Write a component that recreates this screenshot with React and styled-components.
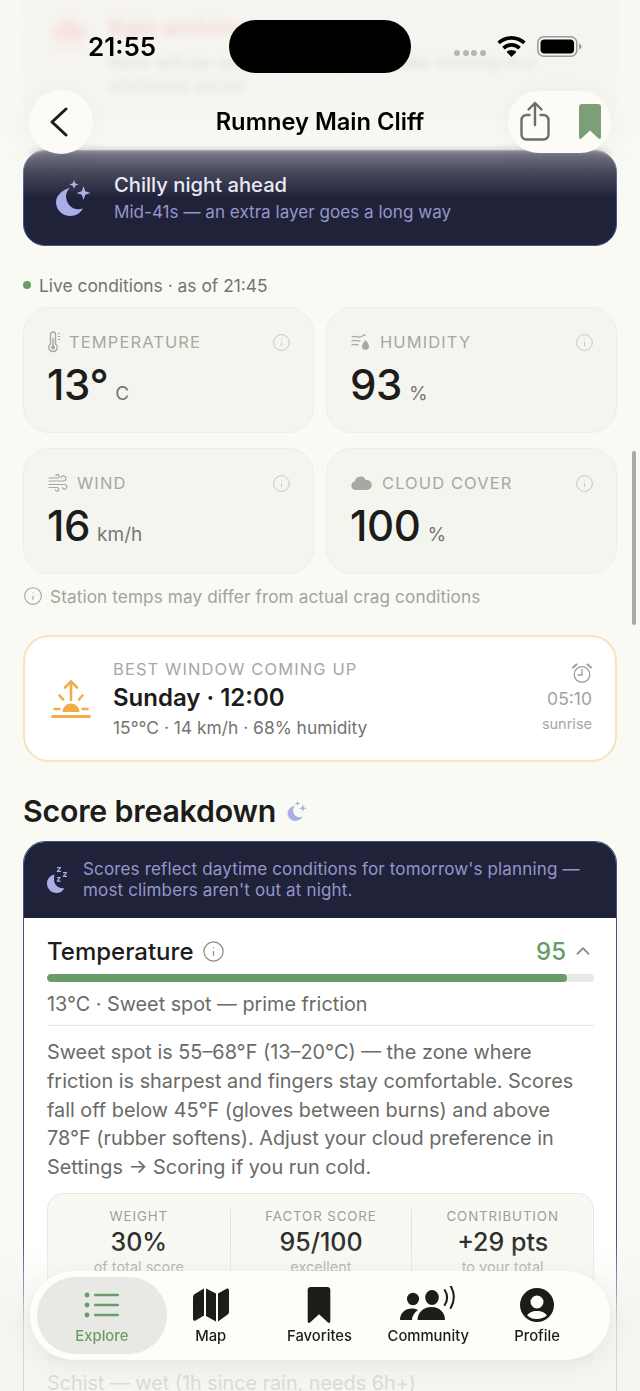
import React from "react";
import styled, { createGlobalStyle } from "styled-components";
import { ChevronUp, Info } from "lucide-react";

const GlobalStyle = createGlobalStyle`
  html, body { margin: 0; padding: 0; background: #fafaf5; }
  * { box-sizing: border-box; }
  body { font-family: Inter, "Noto Sans", sans-serif; color: #1c1c1a; }
`;

const Page = styled.div`
  position: relative;
  width: 640px;
  height: 1391px;
  overflow: hidden;
  background: #fafaf5;
`;

const Content = styled.main`
  display: flex;
  flex-direction: column;
  padding: 0 23px;
  margin-top: -20px;
`;

const RainCard = styled.section`
  height: 142px;
  display: flex;
  gap: 21px;
  padding: 32px 28px 0;
  background: #f1e9e3;
  border: 1px solid #f0d4cb;
  border-radius: 22px;
  margin-bottom: 28px;
`;

const RainTitle = styled.div`
  font-size: 23px;
  line-height: 30px;
  font-weight: 600;
  color: #e0796b;
`;

const RainText = styled.div`
  font-size: 18px;
  line-height: 23px;
  color: #86837e;
  width: 430px;
  margin-top: 8px;
`;

const NightCard = styled.section`
  height: 96px;
  display: flex;
  align-items: center;
  gap: 23px;
  padding: 0 26px 0 31px;
  background: #20223a;
  border: 1px solid #4c5088;
  border-radius: 22px;
`;

const NightTitle = styled.div`
  font-size: 20.2px;
  font-weight: 500;
  line-height: 27px;
  color: #e9e9f5;
`;

const NightSub = styled.div`
  font-size: 17.1px;
  line-height: 27px;
  color: #9497c8;
`;

const LiveRow = styled.div`
  display: flex;
  align-items: center;
  gap: 8px;
  margin: 29px 0 12px;
  height: 20px;
  font-size: 17.4px;
  color: #73746f;
`;

const Dot = styled.span`
  width: 8px;
  height: 8px;
  border-radius: 50%;
  background: #6a9c68;
`;

const Grid = styled.div`
  display: grid;
  grid-template-columns: 291px 291px;
  column-gap: 12px;
  row-gap: 15px;
`;

const Metric = styled.div`
  height: 126px;
  padding: 24px 22px 0 24px;
  background: #f5f5f0;
  border: 1px solid #eeeee8;
  border-radius: 26px;
`;

const MetricHead = styled.div`
  display: flex;
  align-items: center;
  height: 20px;
  color: #a6a8a2;
  svg { flex: none; }
`;

const MetricLabel = styled.span`
  flex: 1;
  margin-left: ${(p) => p.$gap}px;
  font-size: 16.5px;
  letter-spacing: 1.1px;
  color: #a6a8a2;
`;

const MetricValue = styled.div`
  display: flex;
  align-items: baseline;
  gap: 7px;
  margin: 8px 0 0 -1px;
  line-height: 50px;
  font-size: 42px;
  font-weight: 500;
  letter-spacing: -0.4px;
  color: #1c1c1a;
`;

const MetricUnit = styled.span`
  font-size: 19px;
  font-weight: 400;
  letter-spacing: 0;
  color: #777873;
`;

const StationNote = styled.div`
  display: flex;
  align-items: center;
  gap: 7px;
  height: 24px;
  margin: 10px 0 27px 0;
  font-size: 17.2px;
  letter-spacing: 0.1px;
  color: #a1a39d;
`;

const BestCard = styled.section`
  height: 127px;
  display: flex;
  align-items: center;
  padding: 0 23px 0 26px;
  background: #fff;
  border: 2px solid #f9e3bf;
  border-radius: 26px;
`;

const BestBody = styled.div`
  flex: 1;
  margin-left: 22px;
`;

const BestEyebrow = styled.div`
  font-size: 16.5px;
  line-height: 22px;
  letter-spacing: 1.1px;
  color: #a6a8a2;
`;

const BestTitle = styled.div`
  font-size: 24px;
  line-height: 36px;
  font-weight: 600;
  color: #1c1c1a;
`;

const BestMeta = styled.div`
  font-size: 17.4px;
  line-height: 23px;
  color: #73746f;
`;

const BestSide = styled.div`
  display: flex;
  flex-direction: column;
  align-items: flex-end;
`;

const BestTime = styled.div`
  font-size: 17.5px;
  line-height: 24px;
  margin-top: 3px;
  color: #a1a39d;
`;

const BestSideNote = styled.div`
  font-size: 14.5px;
  line-height: 21px;
  margin-top: 2px;
  color: #a6a8a2;
`;

const SectionTitle = styled.h2`
  display: flex;
  align-items: center;
  gap: 11px;
  height: 40px;
  margin: 29px 0 10px;
  font-size: 30.3px;
  font-weight: 600;
  letter-spacing: -0.2px;
  color: #1c1c1a;
`;

const ScoreCard = styled.section`
  background: #fff;
  border: 1.5px solid #4c5088;
  border-radius: 22px 22px 0 0;
  overflow: hidden;
`;

const ScoreNotice = styled.div`
  height: 76px;
  display: flex;
  align-items: center;
  gap: 15px;
  padding: 0 22px 0 23px;
  background: #20223a;
  font-size: 17px;
  line-height: 21px;
  letter-spacing: 0.15px;
  color: #9497c8;
  svg { flex: none; }
`;

const Factor = styled.div`
  padding: 0 22px 0 23px;
`;

const FactorHead = styled.div`
  display: flex;
  align-items: center;
  height: 42px;
  margin-top: ${(p) => p.$top}px;
`;

const FactorName = styled.span`
  font-size: 24px;
  font-weight: 500;
  color: #1c1c1a;
`;

const FactorScore = styled.span`
  margin-left: auto;
  font-size: 24px;
  font-weight: 500;
  color: ${(p) => p.$color};
`;

const Track = styled.div`
  height: 8px;
  margin-top: 2px;
  border-radius: 4px;
  background: #e8e8e4;
  overflow: hidden;
`;

const TrackFill = styled.div`
  height: 100%;
  border-radius: 4px;
  background: ${(p) => p.$color};
`;

const FactorSummary = styled.div`
  font-size: 19.8px;
  line-height: 26px;
  margin-top: 9px;
  padding-bottom: 8px;
  border-bottom: ${(p) => (p.$plain ? "none" : "1px solid #e6e6e1")};
  color: #6a6b66;
`;

const FactorText = styled.p`
  margin: 12px 0 11px;
  font-size: 19.85px;
  line-height: 28.8px;
  color: #6a6b66;
`;

const StatsBox = styled.div`
  display: grid;
  grid-template-columns: repeat(3, 1fr);
  height: 102px;
  padding-top: 15px;
  background: #f9f9f4;
  border: 1px solid #e8e8e2;
  border-radius: 16px;
`;

const Stat = styled.div`
  display: flex;
  flex-direction: column;
  align-items: center;
  height: 70px;
  border-left: ${(p) => (p.$first ? "none" : "1px solid #e4e4df")};
`;

const StatLabel = styled.div`
  font-size: 13.3px;
  line-height: 14px;
  letter-spacing: 0.9px;
  color: #9c9e98;
`;

const StatValue = styled.div`
  font-size: 25px;
  line-height: 34px;
  margin-top: 2px;
  font-weight: 500;
  color: #2c2c2a;
`;

const StatNote = styled.div`
  font-size: 14.5px;
  line-height: 20px;
  margin-top: -2px;
  color: #a6a8a2;
`;

const TopBlur = styled.div`
  position: absolute;
  inset: 0 0 auto 0;
  height: 160px;
  backdrop-filter: blur(3.500px);
  mask-image: linear-gradient(#000 88%, transparent 100%);
`;

const TopFade = styled.div`
  position: absolute;
  inset: 0 0 auto 0;
  height: 198px;
  background: linear-gradient(
    rgba(247, 247, 243, 0.76) 0%,
    rgba(248, 248, 243, 0.8) 68%,
    rgba(248, 248, 243, 0.42) 76%,
    rgba(248, 248, 243, 0.18) 87%,
    rgba(248, 248, 243, 0) 100%
  );
`;

const BottomVeil = styled.div`
  position: absolute;
  inset: auto 0 0 0;
  height: 150px;
  background: linear-gradient(rgba(243, 243, 239, 0), rgba(243, 243, 239, 0.82) 55%, rgba(243, 243, 239, 0.82));
`;

const ScrollThumb = styled.div`
  position: absolute;
  top: 451px;
  right: 4px;
  width: 4px;
  height: 174px;
  border-radius: 2px;
  background: #a9aaa6;
`;

const Island = styled.div`
  position: absolute;
  top: 20px;
  left: 229px;
  width: 182px;
  height: 53px;
  border-radius: 27px;
  background: #000;
`;

const StatusTime = styled.div`
  position: absolute;
  top: 32px;
  left: 88px;
  font-family: Inter, sans-serif;
  font-size: 26px;
  line-height: 30px;
  font-weight: 600;
  color: #000;
`;

const StatusIcons = styled.div`
  position: absolute;
  top: 36px;
  left: 454px;
  display: flex;
  align-items: center;
  gap: 11px;
`;

const SignalDots = styled.div`
  display: flex;
  gap: 2.5px;
  margin-top: 12px;
`;

const SignalDot = styled.span`
  width: 6px;
  height: 6px;
  border-radius: 50%;
  background: #b5b5b1;
`;

const RoundButton = styled.button`
  position: absolute;
  top: 90px;
  left: 29px;
  width: 64px;
  height: 64px;
  display: flex;
  align-items: center;
  justify-content: center;
  padding: 0 4px 0 0;
  border: none;
  border-radius: 50%;
  background: #fcfbf6;
  color: #1c1c1a;
  box-shadow: 0 4px 24px rgba(60, 60, 50, 0.06);
`;

const HeaderTitle = styled.h1`
  position: absolute;
  top: 105px;
  left: 0;
  right: 0;
  margin: 0;
  text-align: center;
  font-size: 23.7px;
  line-height: 34px;
  font-weight: 600;
  color: #000;
`;

const ActionPill = styled.div`
  position: absolute;
  top: 91px;
  left: 508px;
  width: 103px;
  height: 62px;
  display: flex;
  align-items: center;
  justify-content: space-between;
  padding: 0 10px 2px 12px;
  border-radius: 31px;
  background: #fcfbf6;
  box-shadow: 0 4px 24px rgba(60, 60, 50, 0.06);
`;

const TabBar = styled.nav`
  position: absolute;
  top: 1271px;
  left: 30px;
  width: 580px;
  height: 89px;
  display: grid;
  grid-template-columns: repeat(5, 108.8px);
  align-items: center;
  padding: 0 0 0 17.5px;
  border-radius: 45px;
  background: rgba(253, 253, 249, 0.97);
  backdrop-filter: blur(4px);
  box-shadow: 0 6px 24px rgba(60, 60, 50, 0.08);
`;

const Tab = styled.div`
  display: flex;
  flex-direction: column;
  align-items: center;
  justify-content: flex-start;
  height: 77px;
  margin: ${(p) => (p.$active ? "0 -11px" : "0")};
  padding-top: 9px;
  border-radius: 38px;
  background: ${(p) => (p.$active ? "#e8e8e4" : "transparent")};
  color: ${(p) => (p.$active ? "#6a9c68" : "#1c1c1a")};
`;

const TabIcon = styled.div`
  height: 38px;
  display: flex;
  align-items: center;
  justify-content: center;
`;

const TabLabel = styled.span`
  margin-top: 3px;
  font-size: 14.8px;
  line-height: 18px;
  font-weight: 500;
`;

const MoonStars = ({ size = 36, color = "#a9aee6" }) => (
  <svg width={size} height={size} viewBox="0 0 36 36" fill={color}>
    <path d="M15 8C8 9.500 1 15 1 22c0 8 6.500 14 14.500 14 5.500 0 10-3 12.500-7.500-1.500.6-3 .8-4.500.8C16 29.300 11 23 11 16c0-3 1.500-5.800 4-8z" />
    <path d="M19 0l1.200 3.300L23.500 4.500l-3.300 1.200L19 9l-1.200-3.300L14.500 4.500l3.300-1.200z" />
    <path d="M28.500 6l1.700 5.300 5.300 1.700-5.300 1.700-1.700 5.300-1.700-5.300-5.300-1.700 5.300-1.700z" />
  </svg>
);

const MoonZzz = () => (
  <svg width="21" height="26" viewBox="0 0 21 26" fill="#a9aee6">
    <path d="M7.500 7.500C3 8.500 0 12 0 16.500 0 21.800 4.200 26 9.500 26c3.500 0 6.500-2 8-5-5.500 1-10.500-2.500-10.500-8.500 0-1.800.2-3.500.5-5z" />
    <path d="M10 0h4v1l-2.600 2.800H14v1.200h-4.200v-1l2.600-2.800H10zM16 5h4v1l-2.600 2.800H20V10h-4.200V9l2.600-2.800H16zM10 10h3.600v1l-2.200 2.500h2.200v1.200H9.800v-1l2.200-2.500H10z" />
  </svg>
);

const RainCloud = () => (
  <svg width="36" height="44" viewBox="0 0 36 44" fill="#eea99e">
    <path d="M8 28a7.500 7.500 0 0 1-1-15 10.500 10.500 0 0 1 20-1 8 8 0 0 1 0 16z" />
    <path d="M9 33l-2 6M18 33l-2 6M27 33l-2 6" fill="none" stroke="#eea99e" strokeWidth="3" strokeLinecap="round" />
  </svg>
);

const BackChevron = () => (
  <svg width="18" height="30" viewBox="0 0 18 30" fill="none" stroke="#1c1c1a" strokeWidth="3" strokeLinecap="round" strokeLinejoin="round">
    <path d="M16 2L2 15l14 13" />
  </svg>
);

const Thermometer = () => (
  <svg width="12" height="22" viewBox="0 0 12 22" fill="none" stroke="#a6a8a2" strokeWidth="1.400">
    <path d="M2.500 13V3.500a2.500 2.500 0 0 1 5 0V13a4.200 4.200 0 1 1-5 0z" />
    <circle cx="5" cy="16.500" r="2" fill="#a6a8a2" stroke="none" />
    <path d="M5 16V7" />
    <path d="M10 2.500h2M10 5.500h2M10 8.500h2" strokeWidth="1" />
  </svg>
);

const HumidityIcon = () => (
  <svg width="19" height="18" viewBox="0 0 19 18" fill="none" stroke="#a6a8a2" strokeWidth="1.300" strokeLinecap="round">
    <path d="M1 4c3-2 5 1 8 0s3-2 5-2M1 8c3-2 5 1 8 0M1 12c2-1.500 4 0 6 0" />
    <path d="M14.500 7c2 2.500 3.500 4 3.500 6.300a3.500 3.500 0 0 1-7 0C11 11 12.500 9.500 14.500 7z" fill="#a6a8a2" stroke="none" />
  </svg>
);

const WindIcon = () => (
  <svg width="20" height="18" viewBox="0 0 20 18" fill="none" stroke="#a6a8a2" strokeWidth="1.200" strokeLinecap="round">
    <path d="M1 7h14.500a2.500 2.500 0 1 0-2.400-3.300M1 4h8.500a1.700 1.700 0 1 0-1.600-2.300M1 10.500h15.500a2.300 2.300 0 1 1-2.200 3M1 13.500h8a1.800 1.800 0 1 1-1.700 2.400" />
  </svg>
);

const CloudIcon = () => (
  <svg width="21" height="14" viewBox="0 0 21 14" fill="#a6a8a2">
    <path d="M4.500 14A4.300 4.300 0 0 1 3.800 5.500 5.800 5.800 0 0 1 14.800 4 4.900 4.900 0 0 1 16.500 14z" />
  </svg>
);

const SunriseIcon = () => (
  <svg width="40" height="38" viewBox="0 0 40 38" fill="none" stroke="#f2ad48" strokeWidth="2.600" strokeLinecap="round">
    <path d="M20 20V2M14 7.500L20 1.500l6 6" />
    <path d="M8.500 15.500l3.500 4M31.500 15.500l-3.500 4" />
    <path d="M3.500 29h5M31.500 29h5" />
    <path d="M1.500 36.500h37" strokeWidth="3" />
    <path d="M11.500 32a8.500 8.500 0 0 1 17 0z" fill="#f2ad48" stroke="none" />
  </svg>
);

const AlarmIcon = () => (
  <svg width="20" height="21" viewBox="0 0 20 21" fill="none" stroke="#9c9e98" strokeWidth="1.300" strokeLinecap="round">
    <circle cx="10" cy="11.500" r="7.800" />
    <path d="M10 6.500v5.500H6" />
    <path d="M1 4.500L4.500 1.500M19 4.500L15.500 1.500" strokeWidth="2" />
  </svg>
);

const ShareIcon = () => (
  <svg width="30" height="40" viewBox="0 0 30 40" fill="none" stroke="#6b6e69" strokeWidth="2.400" strokeLinecap="round" strokeLinejoin="round">
    <path d="M15 24V2M8.500 8.500L15 2l6.500 6.500" />
    <path d="M9.500 14H6.500a5 5 0 0 0-5 5v14.500a5 5 0 0 0 5 5h17a5 5 0 0 0 5-5V19a5 5 0 0 0-5-5h-3" />
  </svg>
);

const BookmarkIcon = ({ width = 22, height = 35, color = "#7d9f78" }) => (
  <svg width={width} height={height} viewBox="0 0 22 35" fill={color}>
    <path d="M3 0h16a3 3 0 0 1 3 3v30.500c0 1.200-1.300 1.900-2.300 1.100L11 26.500l-8.700 8.100c-1 .8-2.300.1-2.300-1.100V3a3 3 0 0 1 3-3z" />
  </svg>
);

const WifiIcon = () => (
  <svg width="29" height="21" viewBox="0 0 29 21" fill="#000">
    <path d="M14.500 0C9 0 4 2.100.4 5.600l2.500 2.700A16.600 16.600 0 0 1 14.500 3.700c4.500 0 8.600 1.700 11.600 4.600l2.500-2.700C25 2.100 20 0 14.500 0z" />
    <path d="M14.500 7c-3.600 0-6.900 1.400-9.300 3.700l2.500 2.700a9.800 9.800 0 0 1 13.600 0l2.500-2.700C21.400 8.400 18.100 7 14.500 7z" />
    <path d="M14.500 14c-1.900 0-3.600.7-4.900 1.900l4.900 5.100 4.900-5.100c-1.300-1.200-3-1.900-4.900-1.900z" />
  </svg>
);

const BatteryIcon = () => (
  <svg width="45" height="21" viewBox="0 0 45 21" fill="none">
    <rect x="0.800" y="0.800" width="39" height="19.400" rx="6" stroke="#9a9a96" strokeWidth="1.500" />
    <rect x="3.500" y="3.500" width="33.600" height="14" rx="4" fill="#000" />
    <path d="M42 7.500c1.500.5 2.500 1.600 2.500 3s-1 2.500-2.500 3z" fill="#9a9a96" />
  </svg>
);

const ListIcon = () => (
  <svg width="36" height="28" viewBox="0 0 36 28" fill="#6a9c68">
    <circle cx="3" cy="4" r="2.400" />
    <circle cx="3" cy="14" r="2.400" />
    <circle cx="3" cy="24" r="2.400" />
    <rect x="10" y="2.700" width="25" height="2.600" rx="1.300" />
    <rect x="10" y="12.700" width="25" height="2.600" rx="1.300" />
    <rect x="10" y="22.700" width="25" height="2.600" rx="1.300" />
  </svg>
);

const MapIcon = () => (
  <svg width="36" height="34" viewBox="0 0 36 34" fill="#1c1c1a">
    <path d="M11 0.500L2.500 5.500C1 6.400 0 7.500 0 9.500V31c0 1.500 1.400 2.300 2.600 1.600L11 27.500z" />
    <path d="M13 0.500l10 5v28l-10-5.500z" />
    <path d="M25 5.500L33.500 0.700c1.200-.7 2.500 0 2.500 1.500v21.500c0 1.500-.8 2.700-2 3.400L25 33.500z" />
  </svg>
);

const PeopleIcon = () => (
  <svg width="56" height="38" viewBox="0 1 56 38" fill="#1c1c1a">
    <ellipse cx="13" cy="14" rx="6" ry="6.200" />
    <ellipse cx="32" cy="12.500" rx="6.800" ry="7.500" />
    <path d="M0 35C0 28 5 23.500 12 23.500c2.500 0 4.500.6 6 1.500C14.500 27.500 12 31 12 35z" />
    <path d="M17.500 35c0-7 5.500-13 14-13S45 28 45 35z" />
    <path d="M44.700 5Q49.500 12.500 44.700 20" fill="none" stroke="#1c1c1a" strokeWidth="2" strokeLinecap="round" />
    <path d="M50.700 1Q57 12 50.700 23" fill="none" stroke="#1c1c1a" strokeWidth="2" strokeLinecap="round" />
  </svg>
);

const ProfileIcon = () => (
  <svg width="34" height="34" viewBox="0 0 34 34" fill="#1c1c1a">
    <path
      fillRule="evenodd"
      d="M17 0a17 17 0 1 1 0 34 17 17 0 0 1 0-34zm0 7.500a6.500 6.500 0 1 0 0 13 6.500 6.500 0 0 0 0-13zM17 23c-5 0-8.500 2-9.800 4.500A13.500 13.500 0 0 0 17 31c3.900 0 7.400-1.300 9.800-3.500C25.500 25 22 23 17 23z"
    />
  </svg>
);

const metrics = [
  { label: "TEMPERATURE", gap: 9, icon: <Thermometer />, value: "13°", unit: "C" },
  { label: "HUMIDITY", gap: 10, icon: <HumidityIcon />, value: "93", unit: "%" },
  { label: "WIND", gap: 9, icon: <WindIcon />, value: "16", unit: "km/h" },
  { label: "CLOUD COVER", gap: 10, icon: <CloudIcon />, value: "100", unit: "%" },
];

const stats = [
  { label: "WEIGHT", value: "30%", note: "of total score" },
  { label: "FACTOR SCORE", value: "95/100", note: "excellent" },
  { label: "CONTRIBUTION", value: "+29 pts", note: "to your total" },
];

const tabs = [
  { label: "Explore", icon: <ListIcon />, active: true },
  { label: "Map", icon: <MapIcon /> },
  { label: "Favorites", icon: <BookmarkIcon width={24} height={36} color="#1c1c1a" /> },
  { label: "Community", icon: <PeopleIcon /> },
  { label: "Profile", icon: <ProfileIcon /> },
];

export default function App() {
  return (
    <Page>
      <GlobalStyle />
      <Content>
        <RainCard>
          <RainCloud />
          <div>
            <RainTitle>Rain arriving</RainTitle>
            <RainText>Rock will be wet by evening. Consider moving to a sheltered sector</RainText>
          </div>
        </RainCard>

        <NightCard>
          <MoonStars />
          <div>
            <NightTitle>Chilly night ahead</NightTitle>
            <NightSub>Mid-41s — an extra layer goes a long way</NightSub>
          </div>
        </NightCard>

        <LiveRow>
          <Dot />
          Live conditions · as of 21:45
        </LiveRow>

        <Grid>
          {metrics.map((m) => (
            <Metric key={m.label}>
              <MetricHead>
                {m.icon}
                <MetricLabel $gap={m.gap}>{m.label}</MetricLabel>
                <Info size={19} strokeWidth={1.2} color="#c4c5c0" />
              </MetricHead>
              <MetricValue>
                {m.value}
                <MetricUnit>{m.unit}</MetricUnit>
              </MetricValue>
            </Metric>
          ))}
        </Grid>

        <StationNote>
          <Info size={20} strokeWidth={1.3} color="#a1a39d" />
          Station temps may differ from actual crag conditions
        </StationNote>

        <BestCard>
          <SunriseIcon />
          <BestBody>
            <BestEyebrow>BEST WINDOW COMING UP</BestEyebrow>
            <BestTitle>Sunday · 12:00</BestTitle>
            <BestMeta>15°°C · 14 km/h · 68% humidity</BestMeta>
          </BestBody>
          <BestSide>
            <AlarmIcon />
            <BestTime>05:10</BestTime>
            <BestSideNote>sunrise</BestSideNote>
          </BestSide>
        </BestCard>

        <SectionTitle>
          Score breakdown
          <MoonStars size={20} />
        </SectionTitle>

        <ScoreCard>
          <ScoreNotice>
            <MoonZzz />
            <span>
              Scores reflect daytime conditions for tomorrow's planning — most climbers aren't out at night.
            </span>
          </ScoreNotice>
          <Factor>
            <FactorHead $top={12}>
              <FactorName>Temperature</FactorName>
              <Info size={23} strokeWidth={1.3} color="#8d8f89" style={{ marginLeft: 9 }} />
              <FactorScore $color="#6a9c68">95</FactorScore>
              <ChevronUp size={22} strokeWidth={2} color="#8d8f89" style={{ marginLeft: 6 }} />
            </FactorHead>
            <Track>
              <TrackFill $color="#6a9c68" style={{ width: "95%" }} />
            </Track>
            <FactorSummary>13°C · Sweet spot — prime friction</FactorSummary>
            <FactorText>
              Sweet spot is 55–68°F (13–20°C) — the zone where friction is sharpest and fingers stay comfortable. Scores fall off below 45°F (gloves between burns) and above 78°F (rubber softens). Adjust your cloud preference in Settings → Scoring if you run cold.
            </FactorText>
            <StatsBox>
              {stats.map((s, i) => (
                <Stat key={s.label} $first={i === 0}>
                  <StatLabel>{s.label}</StatLabel>
                  <StatValue>{s.value}</StatValue>
                  <StatNote>{s.note}</StatNote>
                </Stat>
              ))}
            </StatsBox>
            <FactorHead $top={14}>
              <FactorName>Rock</FactorName>
              <FactorScore $color="#e2665a">2</FactorScore>
              <ChevronUp size={22} strokeWidth={2} color="#8d8f89" style={{ marginLeft: 6 }} />
            </FactorHead>
            <Track>
              <TrackFill $color="#e2665a" style={{ width: "0%" }} />
            </Track>
            <FactorSummary $plain>Schist — wet (1h since rain, needs 6h+)</FactorSummary>
          </Factor>
        </ScoreCard>
      </Content>

      <TopBlur />
      <TopFade />
      <BottomVeil />
      <ScrollThumb />

      <StatusTime>21:55</StatusTime>
      <Island />
      <StatusIcons>
        <SignalDots>
          <SignalDot />
          <SignalDot />
          <SignalDot />
          <SignalDot />
        </SignalDots>
        <WifiIcon />
        <BatteryIcon />
      </StatusIcons>

      <RoundButton aria-label="Back">
        <BackChevron />
      </RoundButton>
      <HeaderTitle>Rumney Main Cliff</HeaderTitle>
      <ActionPill>
        <ShareIcon />
        <BookmarkIcon />
      </ActionPill>

      <TabBar>
        {tabs.map((t) => (
          <Tab key={t.label} $active={t.active}>
            <TabIcon>{t.icon}</TabIcon>
            <TabLabel>{t.label}</TabLabel>
          </Tab>
        ))}
      </TabBar>
    </Page>
  );
}
